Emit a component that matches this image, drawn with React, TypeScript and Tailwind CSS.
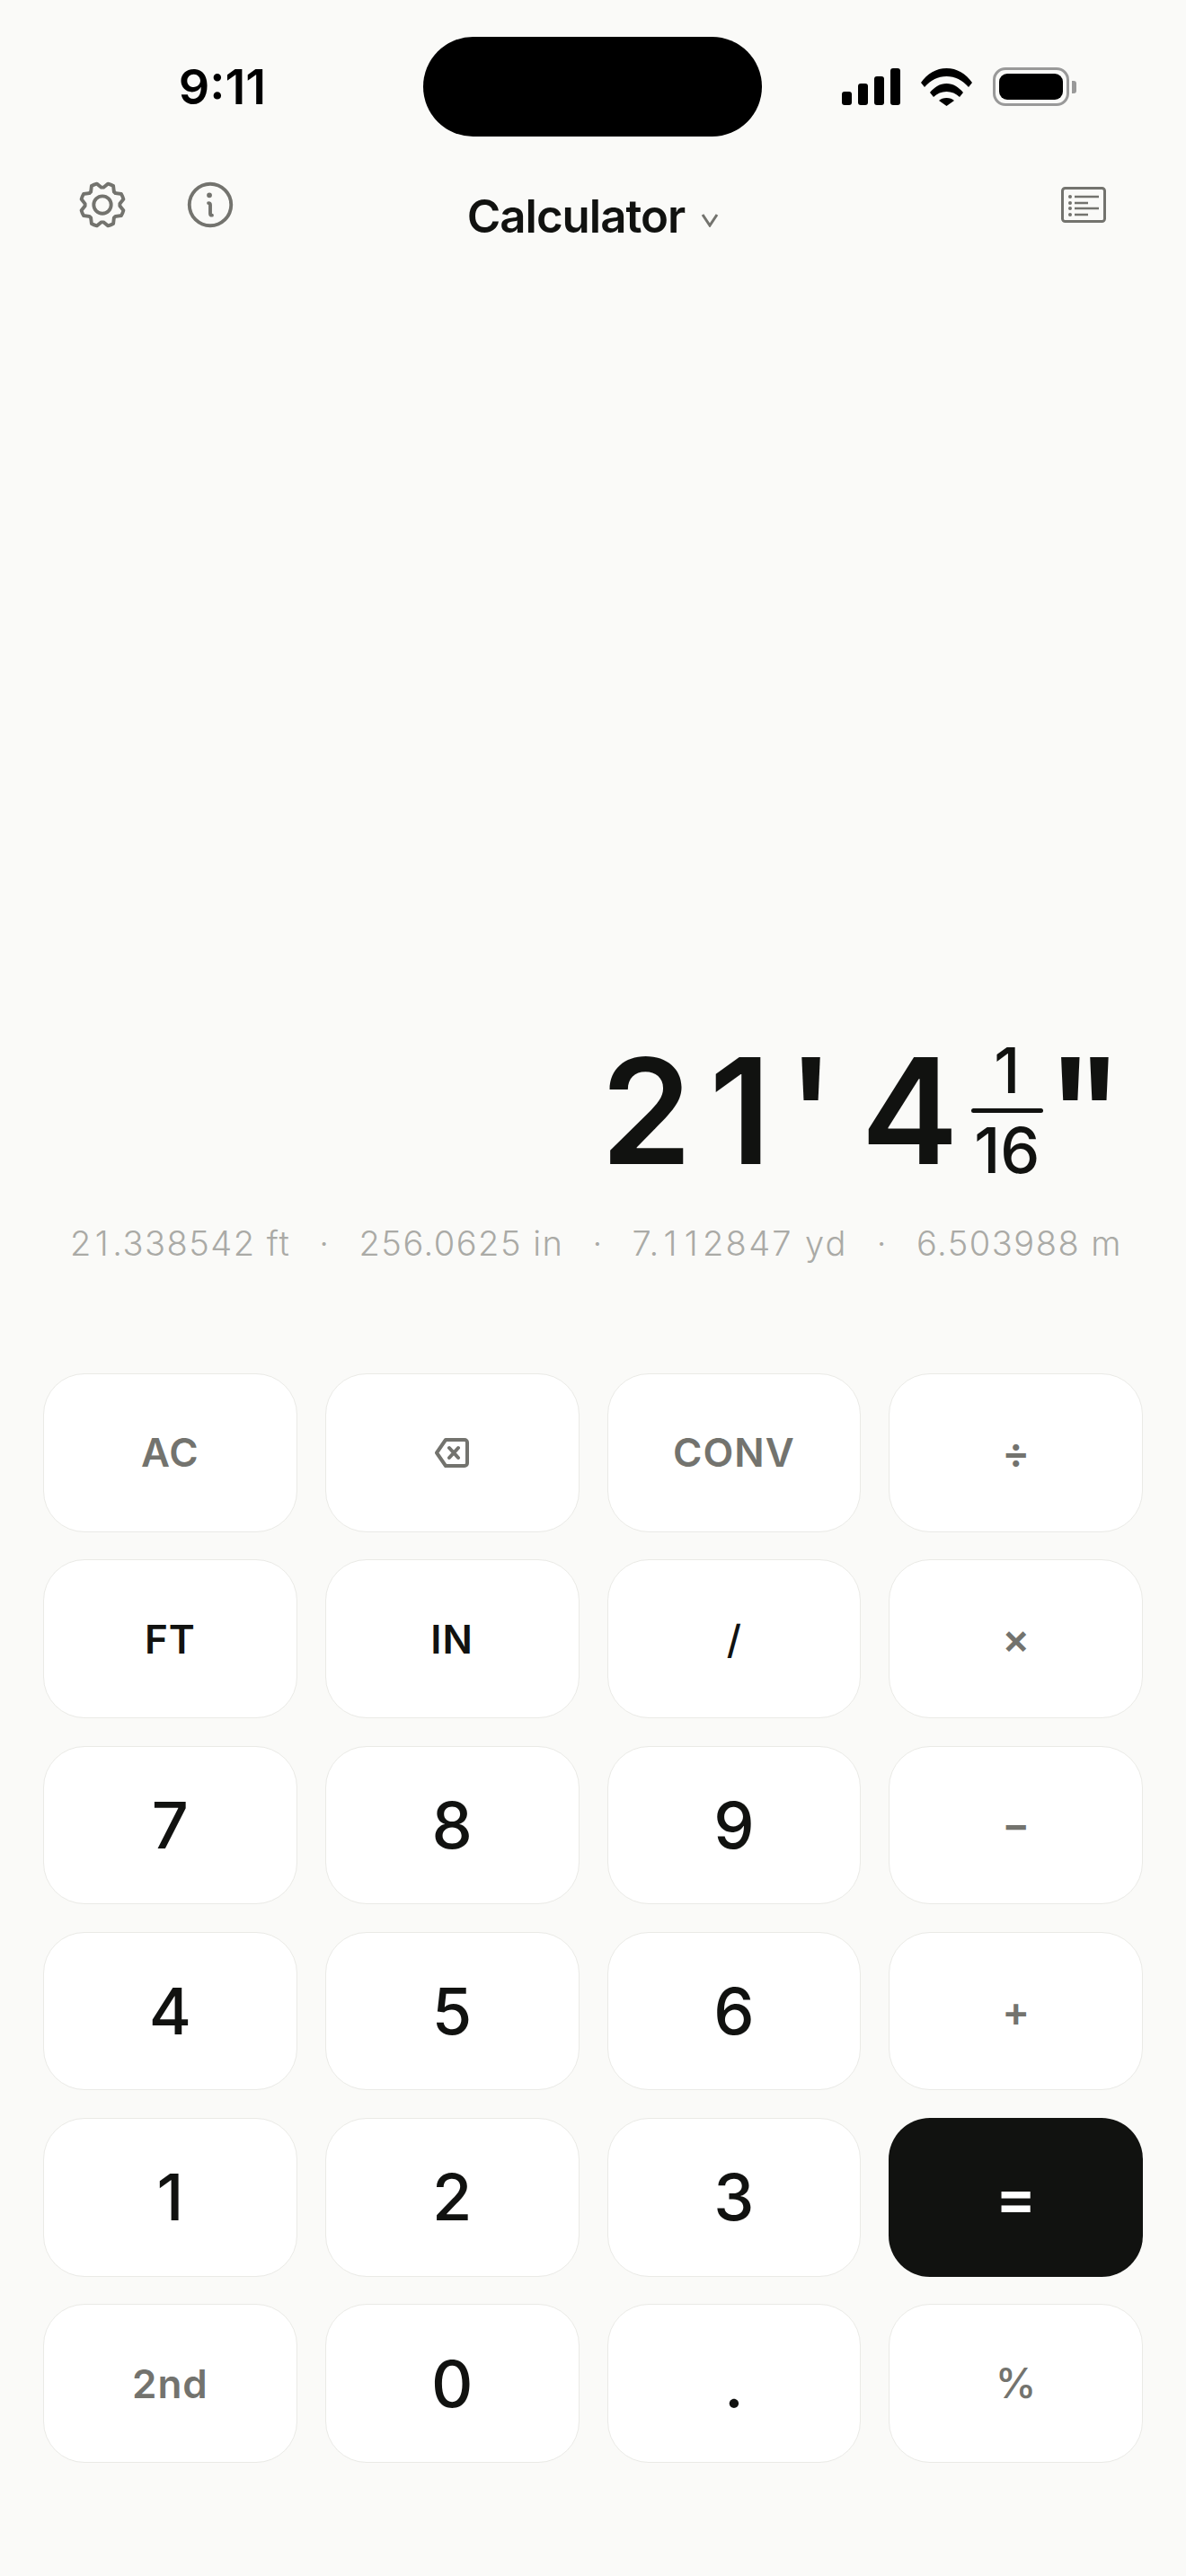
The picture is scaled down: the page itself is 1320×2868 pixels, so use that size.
import { PiGear, PiInfo } from "react-icons/pi";

const MUTED = "#73736e";

type Key = { label: string; kind: "fn" | "unit" | "slash" | "num" | "op" | "pct" | "eq" | "back" };

const keys: Key[] = [
  { label: "AC", kind: "fn" },
  { label: "", kind: "back" },
  { label: "CONV", kind: "fn" },
  { label: "÷", kind: "op" },
  { label: "FT", kind: "unit" },
  { label: "IN", kind: "unit" },
  { label: "/", kind: "slash" },
  { label: "×", kind: "op" },
  { label: "7", kind: "num" },
  { label: "8", kind: "num" },
  { label: "9", kind: "num" },
  { label: "−", kind: "op" },
  { label: "4", kind: "num" },
  { label: "5", kind: "num" },
  { label: "6", kind: "num" },
  { label: "+", kind: "op" },
  { label: "1", kind: "num" },
  { label: "2", kind: "num" },
  { label: "3", kind: "num" },
  { label: "=", kind: "eq" },
  { label: "2nd", kind: "fn" },
  { label: "0", kind: "num" },
  { label: ".", kind: "num" },
  { label: "%", kind: "pct" },
];

function keyClass(kind: Key["kind"]) {
  if (kind === "fn") return "text-[44px] font-semibold tracking-[1px] text-[#73736e]";
  if (kind === "unit") return "text-[44px] font-semibold tracking-[1px] text-[#111210]";
  if (kind === "slash") return "text-[44px] font-medium text-[#111210]";
  if (kind === "op") return "text-[46px] font-semibold text-[#73736e]";
  if (kind === "pct") return "text-[46px] font-medium text-[#73736e]";
  if (kind === "eq") return "text-[68px] font-semibold text-white";
  return "text-[72px] font-medium text-[#111210]";
}

function Signal() {
  return (
    <svg width="65" height="41" viewBox="0 0 65 41" fill="#000">
      <rect x="0" y="26" width="11" height="15" rx="3" />
      <rect x="18" y="17" width="11" height="24" rx="3" />
      <rect x="36" y="9" width="11" height="32" rx="3" />
      <rect x="54" y="0" width="11" height="41" rx="3" />
    </svg>
  );
}

function Wifi() {
  return (
    <svg width="57" height="42" viewBox="0 0 57 42" fill="#000">
      <path d="M0 16C7 6 17 0 28.5 0S50 6 57 16L53 21C46 13 38 9 28.5 9S11 13 4 21Z" />
      <path d="M10 27C15 21 21 17 28.5 17S42 21 47 27L43 32C39 28 34 26 28.5 26S18 28 14 32Z" />
      <path d="M20 36C22 34 25 33 28.5 33S35 34 37 36L28.5 42Z" />
    </svg>
  );
}

function Battery() {
  return (
    <div className="flex items-center gap-[3px]">
      <div className="flex h-[43px] w-[85px] items-center justify-center rounded-[14px] border-[3px] border-[#999]">
        <div className="h-[29px] w-[71px] rounded-[9px] bg-black" />
      </div>
      <div className="h-[14px] w-[5px] rounded-r-[3px] bg-[#999]" />
    </div>
  );
}

function NotesIcon() {
  return (
    <svg width="50" height="40" viewBox="0 0 50 40" fill="none" stroke="#73736e" strokeWidth="2.5">
      <rect x="1.5" y="1.5" width="47" height="37" rx="3" strokeWidth="3" />
      <g fill="#73736e" stroke="none">
        <circle cx="10" cy="11" r="2" />
        <circle cx="10" cy="18" r="2" />
        <circle cx="10" cy="24" r="2" />
        <circle cx="10" cy="31" r="2" />
      </g>
      <path d="M15 11H42M15 18H30M15 24H42M15 31H30" />
    </svg>
  );
}

function BackspaceIcon() {
  return (
    <svg width="38" height="33" viewBox="0 0 38 33" fill="none" stroke="#73736e" strokeWidth="4" strokeLinejoin="round" strokeLinecap="round">
      <path d="M12 2H33A3 3 0 0 1 36 5V28A3 3 0 0 1 33 31H12L2 16.5Z" />
      <path d="M16 11L26 22M26 11L16 22" />
    </svg>
  );
}

// the ones in this readout sit in a full digit width
function One() {
  return <span className="mx-[3px]">1</span>;
}

export default function App() {
  return (
    <div
      className="flex h-[2868px] w-[1320px] flex-col overflow-hidden bg-[#fafaf8] text-[#111210]"
      style={{ fontFamily: "Inter, 'Liberation Sans', sans-serif" }}
    >
      {/* status bar */}
      <div className="flex h-[152px] items-end">
        <div className="flex h-[111px] w-full items-center">
          <div className="w-[471px] pl-[24px] text-center text-[54px] font-semibold leading-none text-black">
            9:11
          </div>
          <div className="h-[111px] w-[377px] rounded-[56px] bg-black" />
          <div className="ml-[89px] flex items-center gap-[23px]">
            <Signal />
            <Wifi />
            <Battery />
          </div>
        </div>
      </div>

      {/* toolbar */}
      <div className="mt-[45px] flex h-[62px] items-center px-[83px]">
        <div className="flex w-[260px] items-center gap-[58px]">
          <PiGear size={62} color={MUTED} />
          <PiInfo size={62} color={MUTED} />
        </div>
        <div className="flex flex-1 items-center justify-center gap-[18px] pt-[24px]">
          <span className="text-[51px] font-semibold leading-none tracking-[-1px]">Calculator</span>
          <svg width="20" height="16" viewBox="0 0 20 16" fill="none" stroke={MUTED} strokeWidth="3" className="mt-[9px]">
            <path d="M2 2L10 14L18 2" />
          </svg>
        </div>
        <div className="flex w-[260px] justify-end pr-[6px]">
          <NotesIcon />
        </div>
      </div>

      {/* display */}
      <div className="mt-[891px] flex h-[173px] items-center justify-end pr-[70px]">
        <div className="flex items-center text-[163px] font-semibold leading-none">
          <span>2</span>
          <span className="ml-[19px]">1</span>
          <span className="ml-[18px]">'</span>
          <span className="ml-[29px]">4</span>
          <div className="ml-[14px] mr-[4px] flex w-[80px] flex-col items-center font-medium">
            <span className="text-[70px] leading-[84px]">1</span>
            <div className="h-[5px] w-[80px] rounded-full bg-[#111210]" />
            <span className="text-[70px] leading-[84px]">16</span>
          </div>
          <span>"</span>
        </div>
      </div>

      {/* conversions */}
      <div className="mt-[42px] flex items-center justify-between pl-[78px] pr-[71px] text-[38px] font-light leading-none tracking-[1.5px] text-[#aaaaa6]">
        <span>2<One />.338542 ft</span>
        <span>·</span>
        <span>256.0625 in</span>
        <span>·</span>
        <span className="tracking-[2.3px]">7.<One /><One />2847 yd</span>
        <span>·</span>
        <span>6.503988 m</span>
      </div>

      {/* keypad */}
      <div className="mt-[126px] grid grid-cols-4 gap-x-[31px] gap-y-[30.75px] px-[48px]">
        {keys.map((k, i) => (
          <div
            key={i}
            className={
              k.kind === "eq"
                ? "flex h-[176.5px] items-center justify-center rounded-[46px] bg-[#111210]"
                : "flex h-[176.5px] items-center justify-center rounded-[46px] border-[1.5px] border-[#eaeae6] bg-white"
            }
          >
            {k.kind === "back" ? <BackspaceIcon /> : <span className={keyClass(k.kind)}>{k.label}</span>}
          </div>
        ))}
      </div>
    </div>
  );
}
